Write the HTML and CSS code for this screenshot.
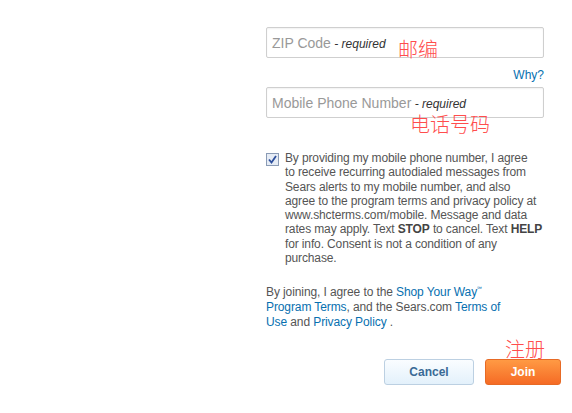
FILE: index.html
```html
<!DOCTYPE html>
<html>
<head>
<meta charset="utf-8">
<link rel="stylesheet" href="styles.css">
</head>
<body>
<div class="form">
  <div class="field">
    <span class="ph">ZIP Code</span><span class="req"> - required</span>
    <span class="note note-zip">邮编</span>
  </div>
  <div class="why"><a>Why?</a></div>
  <div class="field">
    <span class="ph">Mobile Phone Number</span><span class="req"> - required</span>
    <span class="note note-phone">电话号码</span>
  </div>
  <div class="consent">
    <span class="check"><svg width="13" height="13" viewBox="0 0 13 13"><rect x="0.5" y="0.5" width="12" height="12" fill="#e6ecf5" stroke="#8a9bb5"/><path d="M3 6.5 L5.5 9.5 L10 3" fill="none" stroke="#2d4f9c" stroke-width="1.8"/></svg></span>
    <p>By providing my mobile phone number, I agree<br>to receive recurring autodialed messages from<br>Sears alerts to my mobile number, and also<br>agree to the program terms and privacy policy at<br>www.shcterms.com/mobile. Message and data<br>rates may apply. Text <b>STOP</b> to cancel. Text <b>HELP</b><br>for info. Consent is not a condition of any<br>purchase.</p>
  </div>
  <p class="terms">By joining, I agree to the <a>Shop Your Way<sup>℠</sup></a><br><a>Program Terms</a>, and the Sears.com <a>Terms of</a><br><a>Use</a> and <a>Privacy Policy</a> .</p>
  <div class="actions">
    <button class="btn cancel">Cancel</button>
    <button class="btn join">Join<span class="note note-join">注册</span></button>
  </div>
</div>
</body>
</html>
```
FILE: styles.css
```css
html, body { margin: 0; padding: 0; background: #fff; }
body { font-family: "Liberation Sans", Arial, sans-serif; }
.form { margin-left: 266px; width: 278px; padding-top: 27px; }
.field {
  position: relative;
  box-sizing: border-box;
  height: 31px;
  border: 1px solid #cfcfcf;
  border-radius: 2px;
  box-shadow: inset 0 1px 2px rgba(0,0,0,0.06);
  padding: 0 5px;
  display: flex;
  align-items: center;
  white-space: pre;
}
.ph { font-size: 14px; color: #999; }
.req { font-size: 12px; font-style: italic; color: #333; padding-top: 2px; }
.note {
  position: absolute;
  font-family: "Noto Sans CJK SC", sans-serif;
  font-weight: 300;
  color: #ff4d4d;
  font-size: 20px;
  line-height: 22px;
}
.note-zip { left: 131px; top: 10px; }
.note-phone { left: 143px; top: 25px; }
.why { text-align: right; font-size: 12px; height: 29px; line-height: 34px; }
a { color: #0770b0; }
.consent { display: flex; margin-top: 33px; gap: 6px; }
.check { flex: none; width: 13px; height: 13px; margin-top: 1px; }
.consent p { margin: 0; font-size: 12px; line-height: 14.3px; color: #555; width: 272px; white-space: nowrap; letter-spacing: -0.13px; }
.consent b { color: #444; }
.terms { margin: 20px 0 0; font-size: 12px; line-height: 15px; color: #555; letter-spacing: -0.1px; }
.terms sup { font-size: 6px; vertical-align: 5px; line-height: 0; }
.actions { display: flex; justify-content: flex-end; gap: 11px; margin-top: 29px; margin-right: -17px; }
.btn {
  position: relative;
  height: 26px;
  border-radius: 3px;
  font-family: "Liberation Sans", Arial, sans-serif;
  font-size: 12px;
  font-weight: bold;
  padding: 0;
}
.cancel {
  width: 90px;
  border: 1px solid #bcd0e2;
  background: linear-gradient(#fafdff, #e3f1fb);
  color: #3a6a96;
}
.join {
  width: 76px;
  border: 1px solid #e76a25;
  background: linear-gradient(#ff9a44, #f56b25);
  color: #fff;
}
.note-join { left: 19px; top: -22px; }
```
